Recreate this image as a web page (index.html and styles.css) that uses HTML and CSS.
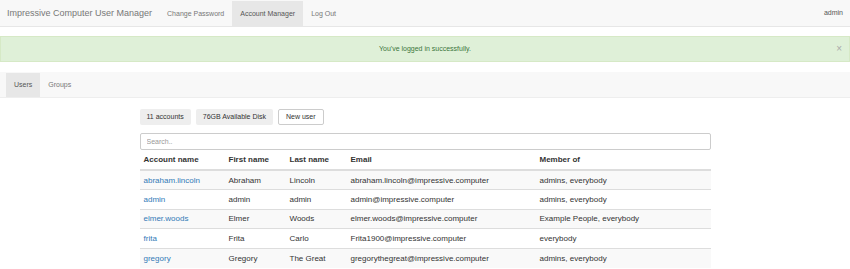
FILE: index.html
```html
<!DOCTYPE html>
<html lang="en">
<head>
    <meta charset="UTF-8">
    <meta name="viewport" content="width=device-width, initial-scale=1.0">
    <title>Impressive Computer User Manager</title>
    <link rel="stylesheet" href="styles.css">
</head>
<body>
    <nav class="navbar">
        <a class="brand" href="#">Impressive Computer User Manager</a>
        <a class="nav-link" href="#">Change Password</a>
        <a class="nav-link active" href="#">Account Manager</a>
        <a class="nav-link" href="#">Log Out</a>
        <span class="nav-user">admin</span>
    </nav>

    <div class="alert">
        You've logged in successfully.
        <span class="alert-close">&times;</span>
    </div>

    <div class="tabs">
        <a class="tab active" href="#">Users</a>
        <a class="tab" href="#">Groups</a>
    </div>

    <div class="content">
        <div class="toolbar">
            <span class="btn btn-info">11 accounts</span>
            <span class="btn btn-info">76GB Available Disk</span>
            <button class="btn btn-default">New user</button>
        </div>
        <input class="search" type="text" placeholder="Search..">

        <table class="users">
            <colgroup>
                <col class="col-account">
                <col class="col-first">
                <col class="col-last">
                <col class="col-email">
                <col>
            </colgroup>
            <thead>
                <tr>
                    <th>Account name</th>
                    <th>First name</th>
                    <th>Last name</th>
                    <th>Email</th>
                    <th>Member of</th>
                </tr>
            </thead>
            <tbody>
                <tr>
                    <td><a href="#">abraham.lincoln</a></td>
                    <td>Abraham</td>
                    <td>Lincoln</td>
                    <td>abraham.lincoln@impressive.computer</td>
                    <td>admins, everybody</td>
                </tr>
                <tr>
                    <td><a href="#">admin</a></td>
                    <td>admin</td>
                    <td>admin</td>
                    <td>admin@impressive.computer</td>
                    <td>admins, everybody</td>
                </tr>
                <tr>
                    <td><a href="#">elmer.woods</a></td>
                    <td>Elmer</td>
                    <td>Woods</td>
                    <td>elmer.woods@impressive.computer</td>
                    <td>Example People, everybody</td>
                </tr>
                <tr>
                    <td><a href="#">frita</a></td>
                    <td>Frita</td>
                    <td>Carlo</td>
                    <td>Frita1900@impressive.computer</td>
                    <td>everybody</td>
                </tr>
                <tr>
                    <td><a href="#">gregory</a></td>
                    <td>Gregory</td>
                    <td>The Great</td>
                    <td>gregorythegreat@impressive.computer</td>
                    <td>admins, everybody</td>
                </tr>
            </tbody>
        </table>
    </div>
</body>
</html>
```

FILE: styles.css
```css
* {
    margin: 0;
    padding: 0;
    box-sizing: border-box;
}

body {
    font-family: "Liberation Sans", Arial, sans-serif;
    font-size: 7px;
    color: #333;
    background: #fff;
}

a {
    text-decoration: none;
}

.navbar {
    display: flex;
    height: 27px;
    background: #f8f8f8;
    border-bottom: 1px solid #e7e7e7;
}

.brand {
    padding: 0 7px 0 7px;
    font-size: 9px;
    line-height: 26px;
    color: #777;
}

.nav-link {
    padding: 0 8px;
    margin-top: 1px;
    line-height: 25px;
    color: #777;
}

.nav-link.active {
    background: #e7e7e7;
    color: #555;
}

.nav-user {
    margin-left: auto;
    padding-right: 7px;
    line-height: 26px;
    color: #555;
}

.alert {
    position: relative;
    margin-top: 9px;
    height: 26px;
    line-height: 24px;
    background: #dff0d8;
    border: 1px solid #d6e9c6;
    color: #3c763d;
    text-align: center;
}

.alert-close {
    position: absolute;
    right: 7px;
    top: 0;
    font-size: 10px;
    color: #aaa;
}

.tabs {
    display: flex;
    margin-top: 10px;
    height: 26px;
    padding-left: 6px;
    background: #f8f8f8;
    border-bottom: 1px solid #eee;
}

.tab {
    padding: 0 8px;
    margin-top: 1px;
    line-height: 24px;
    color: #777;
}

.tab.active {
    background: #e7e7e7;
    color: #555;
}

.content {
    width: 571px;
    margin: 11px auto 0;
}

.toolbar {
    display: flex;
    gap: 5px;
}

.btn {
    height: 16px;
    padding: 0 7px;
    line-height: 16px;
    border-radius: 2px;
    font-family: inherit;
    font-size: 7px;
    color: #333;
}

.btn-info {
    background: #eee;
}

.btn-default {
    background: #fff;
    border: 1px solid #ccc;
    line-height: 14px;
}

.search {
    display: block;
    width: 100%;
    height: 17px;
    margin-top: 8px;
    padding: 0 6px;
    border: 1px solid #ccc;
    border-radius: 2px;
    font-family: inherit;
    font-size: 7px;
    color: #555;
}

.search::placeholder {
    color: #999;
}

.users {
    width: 100%;
    border-collapse: collapse;
    table-layout: fixed;
    font-size: 8px;
}

.col-account { width: 85px; }
.col-first { width: 61px; }
.col-last { width: 61px; }
.col-email { width: 189px; }

.users th {
    height: 20px;
    padding: 0 4px;
    text-align: left;
    font-weight: bold;
    border-bottom: 2px solid #ddd;
}

.users td {
    height: 19.6px;
    padding: 0 4px;
    border-top: 1px solid #ddd;
    white-space: nowrap;
}

.users tbody tr:nth-child(odd) {
    background: #f9f9f9;
}

.users td a {
    color: #337ab7;
}
```
